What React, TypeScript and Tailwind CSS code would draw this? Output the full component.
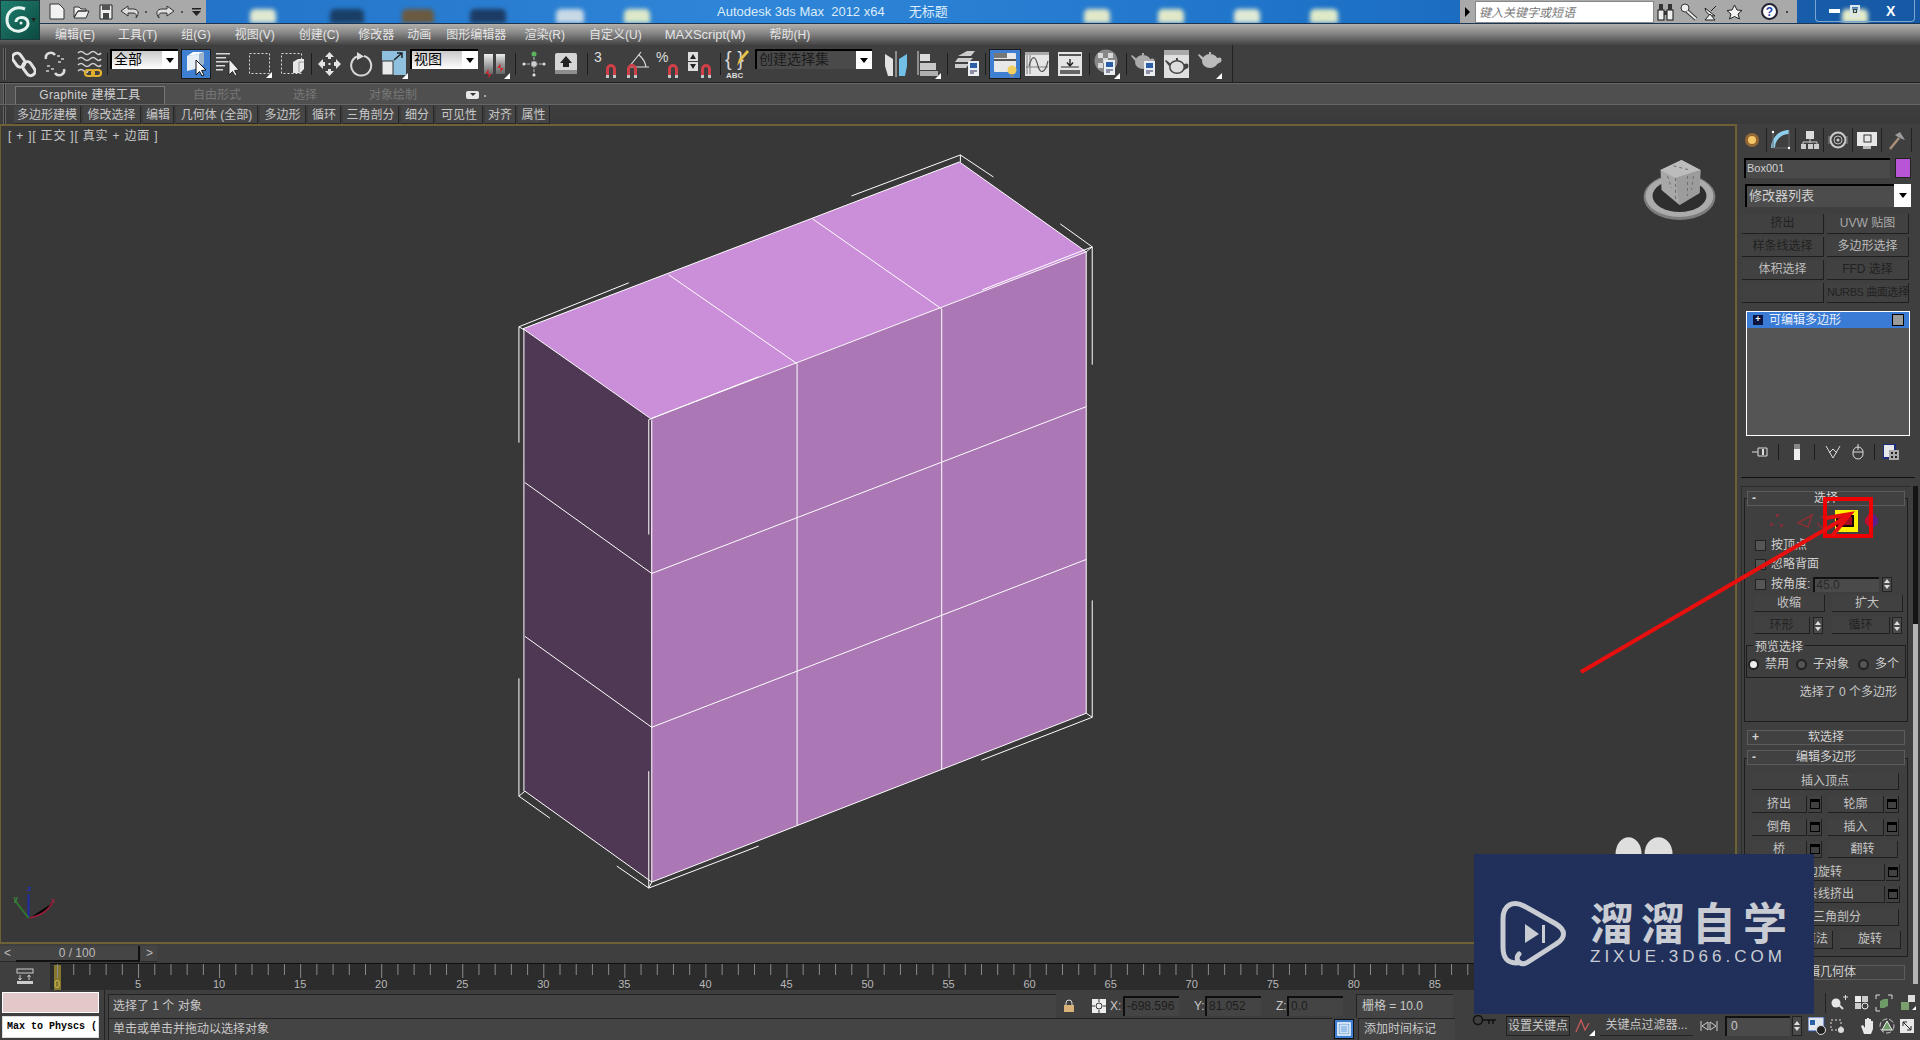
import React from "react";

type P = { children?: React.ReactNode; w: number; h: number; cls?: string };
const S = ({ children, w, h, cls }: P) => (
  <svg width={w} height={h} viewBox={`0 0 ${w} ${h}`} fill="none" className={`shrink-0 ${cls ?? ""}`}>
    {children}
  </svg>
);

const Sep = ({ cls }: { cls: string }) => <div className={`w-px h-[22px] bg-[#1c1c1c] shrink-0 ${cls}`} />;

const Magnet = () => (
  <g>
    <path d="M2 14 V8 a5 5 0 0 1 10 0 V14 H9 V8 a2 2 0 0 0 -4 0 V14 Z" fill="#d04048" />
    <rect x="2" y="14" width="3" height="3" fill="#bfc7c7" />
    <rect x="9" y="14" width="3" height="3" fill="#bfc7c7" />
  </g>
);

const LinkIcon = () => (
  <S w={24} h={28}>
    <g stroke="#e3e3e3" strokeWidth="3">
      <rect x="2" y="3" width="9" height="15" rx="4.5" transform="rotate(-35 6 10)" />
      <rect x="12" y="11" width="9" height="15" rx="4.5" transform="rotate(-35 17 18)" />
    </g>
  </S>
);
const UnlinkIcon = () => (
  <S w={24} h={28}>
    <g stroke="#dcdcdc" strokeWidth="2.5">
      <path d="M3 9 a5 5 0 0 1 9 -4" />
      <path d="M21 19 a5 5 0 0 1 -9 4" />
    </g>
    <g fill="#aaa">
      <rect x="14" y="5" width="3" height="2" /><rect x="18" y="8" width="3" height="2" />
      <rect x="15" y="11" width="3" height="2" /><rect x="4" y="15" width="3" height="2" />
      <rect x="8" y="18" width="3" height="2" /><rect x="3" y="20" width="3" height="2" />
    </g>
  </S>
);
const BindIcon = () => (
  <S w={27} h={30}>
    <g stroke="#cfcfcf" strokeWidth="1.6">
      <path d="M2 4 q3 -3 6 0 t6 0 t6 0 t5 0" />
      <path d="M2 10 q3 -3 6 0 t6 0 t6 0 t5 0" />
      <path d="M2 16 q3 -3 6 0 t6 0 t6 0 t5 0" />
      <path d="M2 22 q3 -3 6 0 t4 0" />
    </g>
    <rect x="9" y="21" width="9" height="6" rx="3" stroke="#e0b030" strokeWidth="2.2" />
    <rect x="16" y="21" width="9" height="6" rx="3" stroke="#e0b030" strokeWidth="2.2" />
  </S>
);
const SelectIcon = () => (
  <div className="w-[30px] h-[30px] bg-[#3f7fd2] border border-[#1c1c1c] flex items-center justify-center ml-[3px] shrink-0">
    <S w={24} h={26}>
      <path d="M3 5 L15 3 V17 L3 20 Z" fill="#e6eef6" />
      <path d="M3 5 L9 1 L20 1 L15 3 Z" fill="#fff" />
      <path d="M15 3 L20 1 V13 L15 17 Z" fill="#9db4cc" />
      <path d="M12 9 V24 L15.5 20.5 L18 25 L20 24 L17.5 19.5 L22 19 Z" fill="#fff" stroke="#111" strokeWidth="1" />
    </S>
  </div>
);
const ByNameIcon = () => (
  <S w={25} h={28}>
    <g fill="#d8d8d8">
      <rect x="1" y="3" width="14" height="1.5" /><rect x="1" y="7" width="10" height="1.5" />
      <rect x="1" y="11" width="14" height="1.5" /><rect x="1" y="15" width="9" height="1.5" />
      <rect x="1" y="19" width="7" height="1.5" />
    </g>
    <path d="M14 9 V25 L17.5 21.5 L20 26 L22 25 L19.5 20.5 L24 20 Z" fill="#eee" stroke="#111" strokeWidth=".8" />
  </S>
);
const RectIcon = () => (
  <S w={24} h={28}>
    <rect x="1.5" y="3.5" width="20" height="20" stroke="#ddd" strokeDasharray="2 2" />
    <path d="M18 28 L24 22 V28 Z" fill="#fff" />
  </S>
);
const WindowIcon = () => (
  <S w={25} h={28}>
    <rect x="1.5" y="3.5" width="20" height="20" stroke="#ddd" strokeDasharray="2 2" />
    <path d="M13 12 L18 9 H24 V19 L20 23 H13 Z" fill="#e8e8e8" />
    <path d="M19 12 H24 M19 12 V22" stroke="#999" />
  </S>
);
const MoveIcon = () => (
  <S w={25} h={26}>
    <path d="M12.5 1 L17 6 H14 V11 H19 V8 L24 13 L19 18 V15 H14 V20 H17 L12.5 25 L8 20 H11 V15 H6 V18 L1 13 L6 8 V11 H11 V6 H8 Z" fill="#e4e4e4" />
    <rect x="8" y="8" width="9" height="10" fill="#3f3f3f" />
    <rect x="11.5" y="12" width="2" height="2" fill="#e4e4e4" />
  </S>
);
const RotateIcon = () => (
  <S w={23} h={28}>
    <path d="M14 6 A10 10 0 1 1 7 6.5" stroke="#d8d8d8" strokeWidth="2" />
    <path d="M7 2 L14 6.5 L7 10 Z" fill="#ddd" />
  </S>
);
const ScaleIcon = () => (
  <S w={26} h={30}>
    <rect x="0" y="2" width="24" height="24" fill="#8fc0de" />
    <rect x="0" y="12" width="11" height="14" fill="#eaeaea" stroke="#333" />
    <path d="M12 11 L20 4 M15 4 H20 V9" stroke="#222" strokeWidth="1.5" />
    <path d="M20 30 L26 24 V30 Z" fill="#fff" />
  </S>
);
const PivotIcon = () => (
  <S w={26} h={30}>
    <rect x="0" y="5" width="9" height="20" fill="url(#gg)" />
    <rect x="12" y="5" width="9" height="20" fill="url(#gh)" />
    <path d="M4.5 20 L1.5 25 H7.5 L4.5 29 Z M16.5 14 L13.5 19 H19.5 L16.5 23 Z" fill="#d21f2a" />
    <path d="M20 30 L26 24 V30 Z" fill="#fff" />
    <defs>
      <linearGradient id="gg" x1="0" y1="0" x2="0" y2="1"><stop offset="0" stopColor="#eee" /><stop offset="1" stopColor="#666" /></linearGradient>
      <linearGradient id="gh" x1="0" y1="0" x2="0" y2="1"><stop offset="0" stopColor="#eee" /><stop offset=".5" stopColor="#999" /><stop offset="1" stopColor="#666" /></linearGradient>
    </defs>
  </S>
);
const ManipIcon = () => (
  <S w={24} h={28}>
    <path d="M12 3 V25 M1 14 H23" stroke="#bbb" strokeDasharray="3 1" />
    <circle cx="12" cy="4" r="2.5" fill="#5db35d" />
    <rect x="9.5" y="11.5" width="5" height="5" fill="#ccc" />
    <circle cx="2" cy="14" r="1.6" fill="#ddd" /><circle cx="22" cy="14" r="1.6" fill="#ddd" />
    <circle cx="12" cy="25" r="1.6" fill="#ddd" />
  </S>
);
const KeyUpIcon = () => (
  <S w={22} h={24}>
    <rect x="0" y="1" width="22" height="21" rx="2" fill="#d5d5d5" />
    <rect x="0" y="18" width="22" height="4" fill="#8e8e8e" />
    <path d="M11 4 L17 11 H14 V15 H8 V11 H5 Z" fill="#222" />
  </S>
);
const Snap = ({ t }: { t: string }) => (
  <div className="relative w-[24px] h-[30px] shrink-0">
    <span className="absolute left-0 top-0 text-[14px] leading-[16px] text-[#ddd]">{t}</span>
    <svg width="14" height="17" viewBox="0 0 14 17" className="absolute right-[0px] bottom-[1px]"><Magnet /></svg>
  </div>
);
const AngleSnap = () => (
  <div className="relative w-[26px] h-[30px] shrink-0">
    <svg width="26" height="30" viewBox="0 0 26 30" fill="none" className="absolute inset-0">
      <path d="M4 18 L16 3 M4 18 H24 M14 6 Q20 11 21 18" stroke="#ddd" strokeWidth="1.2" />
      <g transform="translate(0 12)"><Magnet /></g>
    </svg>
  </div>
);
const SpinSnap = () => (
  <S w={24} h={30}>
    <rect x="0" y="3" width="10" height="9" fill="#ddd" />
    <rect x="0" y="13" width="10" height="9" fill="#ddd" />
    <path d="M5 5 L8 10 H2 Z M5 20 L2 15 H8 Z" fill="#222" />
    <g transform="translate(11 12)"><Magnet /></g>
  </S>
);
const BraceIcon = () => (
  <div className="w-[25px] h-[32px] relative shrink-0">
    <span className="absolute left-0 top-[0px] text-[20px] leading-[22px] text-[#d8d8d8]">{"{ }"}</span>
    <span className="absolute left-[1px] bottom-[0px] text-[8px] leading-[9px] font-bold text-[#ddd]">ABC</span>
    <svg width="14" height="18" viewBox="0 0 14 18" className="absolute right-[0px] top-[1px]">
      <path d="M1 17 L3 10 L11 1 L13 3 L5 12 Z" fill="#e9c24a" />
    </svg>
  </div>
);
const MirrorIcon = () => (
  <S w={25} h={26}>
    <path d="M0 3 L8 8 V25 H3 L0 15 Z" fill="#e2e2e2" />
    <path d="M11 0 V26" stroke="#ddd" />
    <path d="M22 3 L14 8 V25 H20 L22 15 Z" fill="#72bfe8" />
  </S>
);
const AlignIcon = () => (
  <S w={24} h={30}>
    <path d="M1 2 V26" stroke="#ddd" />
    <rect x="3" y="5" width="10" height="7" fill="#ddd" />
    <rect x="3" y="14" width="16" height="7" fill="#c8c8c8" />
    <rect x="3" y="22" width="18" height="5" fill="#b0b0b0" />
    <path d="M18 30 L24 24 V30 Z" fill="#fff" />
  </S>
);
const Doc = ({ x, y }: { x: number; y: number }) => (
  <g transform={`translate(${x} ${y})`}>
    <rect width="11" height="15" fill="#e8eef2" />
    <rect x="2" y="2" width="7" height="5" fill="#2a5fa8" />
    <path d="M2 10 H9 M2 12 H6" stroke="#335" />
  </g>
);
const LayerIcon = () => (
  <S w={25} h={28}>
    <g fill="#ccc">
      <path d="M12 1 H20 L16 6 H3 Z" /><path d="M3 8 H18 L14 12 H0 Z" /><path d="M0 14 H14 L11 18 H0 Z" />
    </g>
    <Doc x={13} y={11} />
  </S>
);
const ExplorerBtn = () => (
  <div className="w-[32px] h-[30px] bg-[#3f7fd2] border border-[#1c1c1c] flex items-center justify-center ml-[3px] shrink-0">
    <S w={28} h={28}>
      <rect x="3" y="3" width="22" height="19" rx="1" fill="#e8e8e8" />
      <rect x="3" y="3" width="13" height="5" fill="#777" />
      <rect x="3" y="9" width="22" height="2" fill="#555" />
      <circle cx="21" cy="20" r="4.5" fill="#f2d060" />
      <rect x="19.5" y="24" width="3" height="3" fill="#888" />
    </S>
  </div>
);
const CurveIcon = () => (
  <S w={25} h={24}>
    <rect width="24" height="24" fill="#e5e5e5" />
    <rect width="24" height="3" fill="#aaa" />
    <path d="M2 22 V3 M5 3 V22 M1 15 H23" stroke="#666" strokeWidth=".8" />
    <path d="M4 14 C8 0 11 6 13 14 S20 22 23 9" stroke="#555" strokeWidth="1.2" />
  </S>
);
const SchematicIcon = () => (
  <S w={24} h={24}>
    <rect width="24" height="24" fill="#e5e5e5" />
    <rect x="1" y="2" width="22" height="2" fill="#555" />
    <rect x="2" y="18" width="20" height="4" fill="#666" />
    <path d="M12 7 V13 M9 10.5 L12 14 L15 10.5" stroke="#222" strokeWidth="1.4" />
    <path d="M3 15 H21" stroke="#333" />
  </S>
);
const MaterialIcon = () => (
  <S w={26} h={30}>
    <circle cx="12" cy="12" r="11.5" fill="#888" />
    <g fill="#d8d8d8">
      <rect x="4" y="4" width="5" height="5" /><rect x="14" y="4" width="5" height="5" />
      <rect x="9" y="9" width="5" height="5" /><rect x="4" y="14" width="5" height="5" />
      <rect x="14" y="14" width="5" height="5" />
    </g>
    <Doc x={10} y={11} />
    <path d="M20 30 L26 24 V30 Z" fill="#fff" />
  </S>
);
const Teapot = ({ x = 0, y = 0, fill = "#d5d5d5" }: { x?: number; y?: number; fill?: string }) => (
  <g transform={`translate(${x} ${y})`} fill={fill}>
    <ellipse cx="12" cy="9" rx="8" ry="7" />
    <path d="M4 8 L0 3 L1 2 L6 6 Z M19 6 Q25 4 23 10 L19 12 Z" />
    <rect x="11" y="0" width="2" height="2" />
  </g>
);
const TeaSetup = () => (
  <S w={25} h={28}>
    <Teapot y={3} fill="#aaa" />
    <Doc x={13} y={11} />
  </S>
);
const TeaFrame = () => (
  <S w={25} h={28}>
    <rect y="0" width="25" height="28" fill="#e0e0e0" />
    <rect y="0" width="25" height="5" fill="#aaa" />
    <g transform="translate(1 8)"><Teapot fill="#444" /><ellipse cx="12" cy="9" rx="6.5" ry="5.5" fill="#ddd" /></g>
  </S>
);
const TeaQuick = () => (
  <S w={24} h={30}>
    <Teapot y={3} fill="#bbb" />
    <path d="M18 30 L24 24 V30 Z" fill="#fff" />
  </S>
);

const Drop = ({ t, cls, textCls = "bg-[linear-gradient(#c8c8c8,#fff)] text-black" }: { t: string; cls: string; textCls?: string }) => (
  <div className={`h-[20px] self-start mt-[4px] flex border-t-2 border-l-2 border-black bg-white shrink-0 ${cls}`}>
    <div className={`flex-1 text-[14px] leading-[17px] pl-[2px] overflow-hidden whitespace-nowrap ${textCls}`}>{t}</div>
    <div className="w-[16px] flex items-center justify-center bg-white"><div className="w-0 h-0 border-l-[4px] border-r-[4px] border-t-[5px] border-l-transparent border-r-transparent border-t-black" /></div>
  </div>
);

const Grip = ({ cls = "" }: { cls?: string }) => <div className={`w-[3px] border-x border-[#666] bg-[#2b2b2b] shrink-0 ${cls}`} />;

const wallpaper = [
  "left-[250px] w-[26px] bg-[#dfe8d0]", "left-[330px] w-[34px] bg-[#1a3f66]", "left-[402px] w-[32px] bg-[#6a5a40]",
  "left-[470px] w-[36px] bg-[#1c3c66]", "left-[556px] w-[28px] bg-[#c7d9e6]", "left-[624px] w-[26px] bg-[#dce8c8]",
  "left-[1084px] w-[26px] bg-[#e0e8c8]", "left-[1158px] w-[26px] bg-[#e0e8c8]", "left-[1234px] w-[26px] bg-[#dfe9d4]",
  "left-[1310px] w-[28px] bg-[#dfe9c8]", "left-[1842px] w-[26px] bg-[#e4ecc8]",
];

const menu: [string, string][] = [
  ["编辑(E)", "ml-[15px]"], ["工具(T)", "ml-[23px]"], ["组(G)", "ml-[24px]"], ["视图(V)", "ml-[24px]"], ["创建(C)", "ml-[24px]"],
  ["修改器", "ml-[19px]"], ["动画", "ml-[13px]"], ["图形编辑器", "ml-[15px]"], ["渲染(R)", "ml-[18px]"], ["自定义(U)", "ml-[24px]"],
  ["MAXScript(M)", "ml-[23px] text-[13px]"], ["帮助(H)", "ml-[24px]"],
];

const TitleBar = () => (
  <div className="relative h-[24px] flex bg-[linear-gradient(90deg,#1f6ec4,#2f86d8_40%,#1d72c8_70%,#1658a3)] border-b border-[#1b3553] overflow-hidden">
    {wallpaper.map((c) => <div key={c} className={`absolute bottom-0 h-[14px] rounded-t-[5px] blur-[2px] ${c}`} />)}
    <div className="relative w-[40px] shrink-0" />
    <div className="relative w-[166px] h-[23px] bg-[#a9a9a9] flex items-center pl-[9px] shrink-0">
      <S w={16} h={17}><path d="M1 1 H10 L15 6 V16 H1 Z" fill="#f2f2f2" stroke="#333" /></S>
      <S w={17} h={15} cls="ml-[8px]"><path d="M1 3 H6 L8 5 H13 V7 H5 L1 13 Z M5 7 H16 L13 14 H1 Z" fill="#eee" stroke="#333" /></S>
      <S w={14} h={16} cls="ml-[9px]"><path d="M1 1 H13 V15 H1 Z" fill="#eee" stroke="#222" /><rect x="3" y="1" width="8" height="5" fill="#555" /><rect x="4" y="9" width="6" height="6" fill="#444" /></S>
      <S w={21} h={14} cls="ml-[7px]"><path d="M8 1 L1 6 L8 11 V8 H13 C16 8 17 10 16 13 C20 8 18 4 13 4 H8 Z" fill="#ddd" stroke="#333" /></S>
      <div className="w-[2px] h-[2px] bg-[#555] ml-[4px]" />
      <S w={20} h={14} cls="ml-[8px]"><path d="M12 1 L19 6 L12 11 V8 H7 C4 8 3 10 4 13 C0 8 2 4 7 4 H12 Z" fill="#ddd" stroke="#333" /></S>
      <div className="w-[2px] h-[2px] bg-[#555] ml-[6px]" />
      <S w={9} h={8} cls="ml-[9px]"><rect width="9" height="1.5" fill="#222" /><path d="M0 3 H9 L4.5 8 Z" fill="#222" /></S>
    </div>
    <span className="relative ml-[511px] text-[13px] leading-[23px] text-[#dcecf9] whitespace-pre">Autodesk 3ds Max  2012 x64</span>
    <span className="relative ml-[24px] text-[13px] leading-[23px] text-[#dcecf9]">无标题</span>
    <div className="flex-1" />
    <div className="relative w-[337px] h-[23px] bg-[#a9a9a9] flex items-center pl-[5px] shrink-0">
      <div className="w-0 h-0 border-y-[5px] border-l-[5px] border-y-transparent border-l-black" />
      <div className="ml-[5px] w-[179px] h-[22px] bg-white text-[12px] italic leading-[23px] pl-[3px] text-[#777] border border-[#888]">键入关键字或短语</div>
      <S w={17} h={18} cls="ml-[3px]"><rect x="1" y="7" width="6" height="10" fill="#eee" stroke="#111" /><rect x="10" y="7" width="6" height="10" fill="#eee" stroke="#111" /><rect x="2" y="1" width="4" height="6" fill="#333" /><rect x="11" y="1" width="4" height="6" fill="#333" /><rect x="7" y="8" width="3" height="4" fill="#333" /></S>
      <S w={18} h={18} cls="ml-[6px]"><circle cx="5" cy="5" r="4" fill="#eee" stroke="#333" /><path d="M7 8 L16 16" stroke="#333" strokeWidth="4" /><path d="M7 8 L16 16" stroke="#eee" strokeWidth="2" /></S>
      <S w={16} h={18} cls="ml-[5px]"><path d="M2 5 A9 9 0 0 0 12 13 Z" fill="#eee" stroke="#222" /><path d="M8 8 L13 3 M2 17 H12 L7 11 Z" stroke="#222" fill="#eee" /></S>
      <S w={17} h={16} cls="ml-[7px]"><path d="M8.5 1 L11 6 L16 6.5 L12 10 L13.5 15 L8.5 12.5 L3.5 15 L5 10 L1 6.5 L6 6 Z" fill="#f2f2f2" stroke="#222" /></S>
      <div className="ml-[18px] w-[17px] h-[17px] rounded-full bg-white border-2 border-[#223] text-[#2448b0] text-[12px] font-bold leading-[14px] text-center">?</div>
      <div className="w-[2px] h-[2px] bg-[#444] ml-[8px]" />
    </div>
    <div className="relative ml-[18px] mr-[5px] w-[100px] h-[22px] border border-t-0 border-[#7ba6d2] rounded-b-[4px] flex items-center shrink-0">
      <div className="ml-[13px] w-[11px] h-[4px] bg-white" />
      <div className="ml-[10px] w-[10px] h-[12px] border-2 border-[#dbe6ef] flex items-center justify-center"><div className="w-[4px] h-[4px] border border-[#345]" /></div>
      <span className="ml-[26px] text-[14px] font-bold text-white leading-[20px]">X</span>
    </div>
  </div>
);

const MenuBar = () => (
  <div className="h-[21px] flex items-center pl-[40px] bg-[linear-gradient(#b2b0ac,#8a8a8a_40%,#434343)] text-[12px] text-[#e4e4e4]">
    {menu.map(([t, c]) => <span key={t} className={`whitespace-nowrap ${c}`}>{t}</span>)}
  </div>
);

const Toolbar = () => (
  <div className="h-[38px] flex bg-[#3f3f3f] border-b border-[#1f1f1f]">
    <div className="w-[1233px] flex items-center pl-[3px] border-r border-[#222] shrink-0">
      <Grip cls="h-[32px]" />
      <div className="ml-[6px]"><LinkIcon /></div>
      <div className="ml-[7px]"><UnlinkIcon /></div>
      <div className="ml-[9px]"><BindIcon /></div>
      <Sep cls="ml-[4px]" />
      <Drop t="全部" cls="ml-[2px] w-[68px]" />
      <SelectIcon />
      <div className="ml-[4px]"><ByNameIcon /></div>
      <div className="ml-[8px]"><RectIcon /></div>
      <div className="ml-[8px]"><WindowIcon /></div>
      <Sep cls="ml-[6px]" />
      <div className="ml-[5px]"><MoveIcon /></div>
      <div className="ml-[8px]"><RotateIcon /></div>
      <div className="ml-[9px]"><ScaleIcon /></div>
      <Drop t="视图" cls="ml-[2px] w-[68px]" />
      <div className="ml-[6px]"><PivotIcon /></div>
      <Sep cls="ml-[5px]" />
      <div className="ml-[6px]"><ManipIcon /></div>
      <div className="ml-[9px]"><KeyUpIcon /></div>
      <Sep cls="ml-[10px]" />
      <div className="ml-[6px]"><Snap t="3" /></div>
      <div className="ml-[7px]"><AngleSnap /></div>
      <div className="ml-[5px]"><Snap t="%" /></div>
      <div className="ml-[8px]"><SpinSnap /></div>
      <Sep cls="ml-[8px]" />
      <div className="ml-[4px]"><BraceIcon /></div>
      <Drop t="创建选择集" cls="ml-[5px] w-[117px]" textCls="bg-[#4a4a4a] text-[#1c1c1c]" />
      <div className="ml-[13px]"><MirrorIcon /></div>
      <div className="ml-[7px]"><AlignIcon /></div>
      <Sep cls="ml-[6px]" />
      <div className="ml-[7px]"><LayerIcon /></div>
      <Sep cls="ml-[5px]" />
      <ExplorerBtn />
      <div className="ml-[4px]"><CurveIcon /></div>
      <div className="ml-[8px]"><SchematicIcon /></div>
      <Sep cls="ml-[7px]" />
      <div className="ml-[4px]"><MaterialIcon /></div>
      <Sep cls="ml-[6px]" />
      <div className="ml-[4px]"><TeaSetup /></div>
      <div className="ml-[8px]"><TeaFrame /></div>
      <div className="ml-[9px]"><TeaQuick /></div>
    </div>
  </div>
);

const ribbonItems: [string, string][] = [
  ["多边形建模", "w-[67px]"], ["修改选择", "w-[58px]"], ["编辑", "w-[31px]"], ["几何体 (全部)", "w-[82px]"], ["多边形", "w-[46px]"],
  ["循环", "w-[33px]"], ["三角剖分", "w-[56px]"], ["细分", "w-[33px]"], ["可见性", "w-[47px]"], ["对齐", "w-[31px]"], ["属性", "w-[32px]"],
];

const Ribbon = () => (
  <div className="h-[41px] flex flex-col">
    <div className="h-[22px] flex items-end bg-[#4f4f4f] border-t border-[#666] border-b border-[#1f1f1f] pl-[3px] text-[12px]">
      <Grip cls="h-[20px]" />
      <div className="ml-[9px] w-[150px] h-[18px] bg-[#434343] border-t border-x border-[#777] text-[#cfcfcf] text-center leading-[17px] tracking-[.3px]">Graphite 建模工具</div>
      <span className="ml-[28px] leading-[18px] text-[#777]">自由形式</span>
      <span className="ml-[52px] leading-[18px] text-[#777]">选择</span>
      <span className="ml-[52px] leading-[18px] text-[#777]">对象绘制</span>
      <div className="ml-[49px] mb-[5px] w-[13px] h-[8px] rounded-[2px] bg-[#e8e8e8] flex justify-center"><div className="w-0 h-0 mt-[2px] border-x-[3px] border-t-[3px] border-x-transparent border-t-[#333]" /></div>
      <div className="ml-[5px] mb-[7px] w-[2px] h-[2px] bg-[#aaa]" />
    </div>
    <div className="flex-1 flex items-center bg-[linear-gradient(#3e3e3e,#3a3a3a)] pl-[3px] text-[12px] text-[#c8c8c8]">
      <Grip cls="h-[18px]" />
      <div className="flex ml-[8px] gap-[2px]">
        {ribbonItems.map(([t, w]) => (
          <div key={t} className={`h-[18px] bg-[#454545] border-r border-b border-[#262626] text-center whitespace-nowrap leading-[19px] ${w}`}>{t}</div>
        ))}
      </div>
    </div>
  </div>
);

const W = "#ffffff";
const scene: [number, number, number, number][] = [
  [522, 329, 959, 162], [959, 162, 1086, 252], [1086, 252, 650, 419], [650, 419, 522, 329],
  [668, 275, 796.5, 364], [812, 219, 941, 309],
  [651, 574, 1086, 407], [651, 728, 1086, 560],
  [524, 483, 651, 574], [524, 637, 651, 728],
  [523, 329, 523, 792], [524, 792, 651, 883], [651, 883, 1086, 714],
  [651, 420, 651, 883], [796.5, 364, 796.5, 826], [941.3, 309, 941.3, 770], [1086, 252, 1086, 714],
  // selection brackets
  [518, 327, 518, 443], [518, 327, 628, 283], [960, 155, 851, 196], [960, 155, 993, 177],
  [1092, 247, 1060, 224], [1092, 247, 1092, 365], [1092, 247, 982, 290],
  [648, 420, 758, 377], [648, 420, 648, 535],
  [518, 797, 518, 679], [518, 797, 549, 819], [648, 889, 648, 772], [648, 889, 616, 867], [648, 889, 758, 847],
  [1092, 718, 1092, 601], [1092, 718, 981, 761], [960, 155, 960, 162], [518, 327, 523, 330], [1092, 247, 1086, 252], [518, 797, 524, 792], [648, 889, 651, 883], [1092, 718, 1086, 714],
];

const Scene = () => (
  <svg viewBox="1 126 1733 817" className="absolute inset-0 w-full h-full">
    <path d="M522 329 L959 162 L1086 252 L650 419 Z" fill="#cb8fd9" />
    <path d="M650 419 L1086 252 V714 L651 883 Z" fill="#ab77b5" />
    <path d="M522 329 L650 419 L651 883 L523 792 Z" fill="#4f3853" />
    {scene.map(([a, b, c, d], i) => <line key={i} x1={a} y1={b} x2={c} y2={d} stroke={W} strokeWidth="1" />)}
    {/* ViewCube */}
    <ellipse cx="1680" cy="197" rx="36" ry="23" fill="#7d7d7d" />
    <ellipse cx="1680" cy="196" rx="34" ry="21" fill="#ababab" />
    <ellipse cx="1680" cy="196" rx="27" ry="16" fill="#2e2e2e" />
    <path d="M1682 160 L1701 170 L1700 193 L1680 205 L1662 190 L1661 170 Z" fill="#a8a8a8" />
    <path d="M1661 170 L1682 160 L1701 170 L1676 178 Z" fill="#bcbcbc" />
    <path d="M1676 178 L1701 170 L1700 193 L1680 205 Z" fill="#9c9c9c" />
    <path d="M1676 178 V200 M1668 176 L1672 188 M1688 176 V196 M1694 176 L1692 190 M1674 166 L1690 170" stroke="#6e6e6e" strokeDasharray="3 3" />
    {/* axis gizmo */}
    <path d="M27 919 V895" stroke="#1c2cb0" strokeWidth="1.8" />
    <path d="M27 919 L13 901" stroke="#2f7a30" strokeWidth="1.8" />
    <path d="M28 919 Q44 916 51 904" stroke="#8f1f3a" strokeWidth="1.8" />
    <text x="26" y="892" fontSize="8" fontWeight="bold" fill="#2233c0">z</text>
    <text x="12" y="902" fontSize="8" fontWeight="bold" fill="#3a8a3a">y</text>
    <text x="49" y="904" fontSize="8" fontWeight="bold" fill="#a02040">x</text>
    {/* blobs behind the watermark */}
    <ellipse cx="1629" cy="855" rx="13" ry="17" fill="#dedede" />
    <ellipse cx="1659" cy="855" rx="14" ry="17" fill="#dedede" />
  </svg>
);

const Viewport = () => (
  <div className="relative h-[820px] border-t-2 border-b-2 border-l border-r-2 border-[#6d6135] bg-[#383838]">
    <Scene />
    <div className="absolute left-[7px] top-[2px] text-[12px] leading-[16px] tracking-[.8px] text-[#c8c8c8] whitespace-pre">[ + ][ 正交 ][ 真实 + 边面 ]</div>
  </div>
);

const TimeSlider = () => (
  <div className="h-[19px] flex bg-[#3f3f3f] items-start pt-[2px] text-[12px] text-[#bbb]">
    <div className="w-[16px] h-[16px] leading-[15px] pl-[4px] bg-[#454545] border-b border-[#2a2a2a]">&lt;</div>
    <div className="w-[124px] h-[16px] bg-[#454545] border-b-2 border-r-2 border-[#111] text-center leading-[15px]">0 / 100</div>
    <div className="w-[16px] h-[16px] leading-[15px] pl-[5px] ml-[1px] bg-[#454545] border-b border-[#2a2a2a]">&gt;</div>
  </div>
);

const frames = Array.from({ length: 106 }, (_, i) => i);
const Track = () => (
  <div className="h-[27px] flex bg-[#3f3f3f]">
    <div className="w-[50px] flex items-center justify-center shrink-0">
      <S w={18} h={17}>
        <rect x="1" y="1" width="16" height="4" stroke="#ccc" />
        <path d="M4 7 V12 M2.5 10 L4 12 L5.5 10 M13 7 V12 M11.5 9 L13 7 L14.5 9" stroke="#ccc" />
        <rect x="1" y="13" width="16" height="3" fill="#ccc" />
      </S>
    </div>
    <svg width="1687" height="27" viewBox="50 963 1687 27" className="bg-[#2c2c2c]">
      <line x1="50" x2="1737" y1="963.5" y2="963.5" stroke="#111" />
      <rect x="54" y="965" width="7" height="25" fill="#85762d" />
      {frames.map((f) => {
        const x = 57.5 + f * 16.21;
        return <line key={f} x1={x} x2={x} y1={964} y2={f % 5 === 0 ? 978 : 975} stroke="#8a8a8a" />;
      })}
      {frames.filter((f) => f % 5 === 0).map((f) => (
        <text key={f} x={57 + f * 16.21} y={988} textAnchor="middle" fontSize="11" fill={f === 0 ? "#c9bb5a" : "#b8b8b8"}>{f}</text>
      ))}
    </svg>
  </div>
);

const Btn = ({ t, cls, tone = "text-[#c4c4c4]", size = "text-[12px]" }: { t: string; cls: string; tone?: string; size?: string }) => (
  <div className={`bg-[#414141] border-b border-r border-[#1f1f1f] border-t-[#4e4e4e] text-center whitespace-nowrap overflow-hidden shrink-0 ${size} ${tone} ${cls}`}>{t}</div>
);

const OptBtn = () => (
  <div className="w-[14px] h-[17px] ml-px bg-[#414141] border-b border-r border-[#1f1f1f] flex items-center justify-center shrink-0">
    <div className="w-[10px] h-[10px] border border-black border-t-[3px]" />
  </div>
);

const Spin = ({ cls }: { cls: string }) => (
  <div className={`w-[10px] flex flex-col justify-center gap-[2px] items-center bg-[#4a4a4a] border border-[#222] shrink-0 ${cls}`}>
    <div className="w-0 h-0 border-x-[3px] border-b-[4px] border-x-transparent border-b-[#ddd]" />
    <div className="w-0 h-0 border-x-[3px] border-t-[4px] border-x-transparent border-t-[#ddd]" />
  </div>
);

const Rollout = ({ t, sign }: { t: string; sign: string }) => (
  <div className="relative z-10 mx-[6px] h-[15px] flex items-center bg-[#414141] border border-[#5c5c5c] text-[12px] text-[#d2d2d2]">
    <span className="w-[14px] pl-[4px] font-bold leading-[13px]">{sign}</span>
    <span className="flex-1 text-center pr-[14px] leading-[13px]">{t}</span>
  </div>
);

const Check = ({ t, cls }: { t: string; cls: string }) => (
  <div className={`flex items-center h-[16px] pl-[10px] text-[12px] text-[#cfcfcf] ${cls}`}>
    <div className="w-[11px] h-[11px] bg-[#555] border border-[#222]" />
    <span className="ml-[5px]">{t}</span>
  </div>
);

const Radio = ({ t, on, cls }: { t: string; on?: boolean; cls: string }) => (
  <div className={`flex items-center ${cls}`}>
    <div className={`w-[11px] h-[11px] rounded-full border-2 border-[#222] ${on ? "bg-[#eee]" : "bg-[#555]"}`} />
    <span className="ml-[6px]">{t}</span>
  </div>
);

const PanelTabs = () => (
  <div className="mt-[4px] h-[24px] flex pl-[1px]">
    <div className="w-[29px] border-r border-[#222] flex items-center justify-center">
      <S w={16} h={16}><circle cx="8" cy="8" r="7" fill="#e8902a" opacity=".5" /><circle cx="8" cy="8" r="4" fill="#f5c56a" /></S>
    </div>
    <div className="w-[29px] border-r border-[#222] flex items-center justify-center">
      <S w={20} h={20}><path d="M2 18 A16 16 0 0 1 18 2" stroke="#8fcdec" strokeWidth="4" /><path d="M2 1 V18 H18 V1" stroke="#666" /><circle cx="2" cy="2" r="1.2" fill="#fff" /><circle cx="18" cy="18" r="1.2" fill="#fff" /></S>
    </div>
    <div className="w-[28px] border-r border-[#222] flex items-center justify-center">
      <S w={20} h={20}><rect x="6" y="1" width="8" height="8" fill="#ddd" /><path d="M10 9 V13 M3 14 V12 H17 V14" stroke="#ccc" /><rect x="1" y="14" width="5" height="5" fill="#ccc" /><rect x="8" y="14" width="5" height="5" fill="#ccc" /><rect x="14" y="14" width="5" height="5" fill="#ccc" /></S>
    </div>
    <div className="w-[29px] border-r border-[#222] flex items-center justify-center">
      <S w={20} h={20}><circle cx="10" cy="10" r="7.5" stroke="#ccc" strokeWidth="2" /><circle cx="10" cy="10" r="4" stroke="#bbb" /><circle cx="10" cy="10" r="1.5" fill="#ccc" /><path d="M1 6 V14 M19 6 V14" stroke="#888" /></S>
    </div>
    <div className="w-[29px] border-r border-[#222] flex items-center justify-center">
      <S w={20} h={19}><rect x="0" y="1" width="20" height="14" fill="#e8e8e8" /><rect x="7" y="4" width="7" height="7" stroke="#333" /><rect x="6" y="15" width="8" height="3" fill="#bbb" /></S>
    </div>
    <div className="w-[30px] border-r border-[#222] flex items-center justify-center">
      <S w={19} h={19}><path d="M3 18 L12 7" stroke="#a8907a" strokeWidth="2.5" /><path d="M8 4 L13 1 L18 9 L15 8 L11 6 Z" fill="#9c9c9c" /></S>
    </div>
  </div>
);

const ModBtns: [string, string, string][] = [
  ["挤出", "text-[#222]", "text-[12px]"], ["UVW 贴图", "text-[#a8a8a8]", "text-[12px]"],
  ["样条线选择", "text-[#222]", "text-[12px]"], ["多边形选择", "text-[#bcbcbc]", "text-[12px]"],
  ["体积选择", "text-[#bcbcbc]", "text-[12px]"], ["FFD 选择", "text-[#222]", "text-[12px]"],
  ["", "", "text-[12px]"], ["NURBS 曲面选择", "text-[#222]", "text-[11px] tracking-[-0.4px]"],
];

const SelectRollout = () => (
  <>
    <div className="mt-[5px]"><Rollout t="选择" sign="-" /></div>
    <div className="mx-[3px] -mt-[8px] h-[224px] border border-[#1e1e1e] flex flex-col">
      <div className="mt-[11px] h-[21px] flex items-center pl-[23px]">
        <S w={62} h={20}>
          <g fill="#7e3036"><rect x="8" y="3" width="3" height="3" /><rect x="2" y="12" width="3" height="3" /><rect x="12" y="13" width="3" height="3" /></g>
          <path d="M30 12 L44 4 L40 16 Z" stroke="#8a2f33" strokeWidth="1.5" />
          <path d="M52 6 L60 6 M50 12 A5 5 0 0 0 56 16" stroke="#8a2f33" strokeWidth="1.5" />
        </S>
        <div className="ml-[5px] w-[23px] h-[22px] bg-[#fff200] flex items-center pl-[1px] shrink-0">
          <div className="w-[18px] h-[12px] border-2 border-[#1a0508] bg-[#a01020]" />
        </div>
        <S w={13} h={13} cls="ml-[7px]"><path d="M4 0 H9 L13 5 V9 L9 13 H4 L0 9 V5 Z" fill="#c01030" /><path d="M6 0 H9 L13 5 V9 L9 13 H6 Z" fill="#5a1f8c" /></S>
      </div>
      <Check t="按顶点" cls="mt-[6px]" />
      <Check t="忽略背面" cls="mt-[3px]" />
      <div className="flex items-center mt-[4px]">
        <Check t="按角度:" cls="" />
        <div className="ml-[3px] w-[66px] h-[15px] bg-[#4a4a4a] border-t-2 border-l-2 border-[#111] text-[12px] leading-[13px] pl-[1px] text-[#2a2a2a]">45.0</div>
        <Spin cls="ml-[3px] h-[15px]" />
      </div>
      <div className="flex mt-[3px] pl-[9px]">
        <Btn t="收缩" cls="w-[71px] h-[17px] leading-[16px]" />
        <Btn t="扩大" cls="ml-[7px] w-[71px] h-[17px] leading-[16px]" />
      </div>
      <div className="flex mt-[5px] pl-[9px]">
        <Btn t="环形" cls="w-[56px] h-[17px] leading-[16px]" tone="text-[#222]" />
        <Spin cls="ml-[3px] h-[17px]" />
        <Btn t="循环" cls="ml-[9px] w-[58px] h-[17px] leading-[16px]" tone="text-[#222]" />
        <Spin cls="ml-[2px] h-[17px]" />
      </div>
      <div className="relative mt-[11px] mx-[1px] h-[33px] border border-[#1e1e1e] flex items-center text-[12px] text-[#cfcfcf]">
        <span className="absolute left-[6px] -top-[6px] px-[2px] bg-[#3f3f3f] leading-[14px]">预览选择</span>
        <Radio t="禁用" on cls="ml-[1px] mt-[5px]" />
        <Radio t="子对象" cls="ml-[7px] mt-[5px]" />
        <Radio t="多个" cls="ml-[9px] mt-[5px]" />
      </div>
      <div className="mt-[6px] h-[16px] text-right pr-[10px] text-[12px] leading-[16px] text-[#c8c8c8]">选择了 0 个多边形</div>
    </div>
  </>
);

const EditRollout = () => (
  <>
    <div className="mt-[5px]"><Rollout t="编辑多边形" sign="-" /></div>
    <div className="mx-[3px] -mt-[7px] h-[199px] border border-[#1e1e1e] pl-[7px]">
      <Btn t="插入顶点" cls="mt-[14px] w-[147px] h-[17px] leading-[16px]" />
      <div className="flex mt-[6px]"><Btn t="挤出" cls="w-[55px] h-[17px] leading-[16px]" /><OptBtn /><Btn t="轮廓" cls="ml-[6px] w-[56px] h-[17px] leading-[16px]" /><OptBtn /></div>
      <div className="flex mt-[6px]"><Btn t="倒角" cls="w-[55px] h-[17px] leading-[16px]" /><OptBtn /><Btn t="插入" cls="ml-[6px] w-[56px] h-[17px] leading-[16px]" /><OptBtn /></div>
      <div className="flex mt-[5px]"><Btn t="桥" cls="w-[55px] h-[17px] leading-[16px]" /><OptBtn /><Btn t="翻转" cls="ml-[6px] w-[70px] h-[17px] leading-[16px]" /></div>
      <div className="flex mt-[6px]"><Btn t="从边旋转" cls="w-[133px] h-[17px] leading-[16px]" /><OptBtn /></div>
      <div className="flex mt-[5px]"><Btn t="沿样条线挤出" cls="w-[133px] h-[17px] leading-[16px]" /><OptBtn /></div>
      <Btn t="编辑三角剖分" cls="mt-[6px] w-[147px] h-[17px] leading-[16px]" />
      <div className="flex mt-[5px]"><Btn t="重复三角算法" cls="w-[81px] h-[18px] leading-[17px]" /><Btn t="旋转" cls="ml-[7px] w-[61px] h-[18px] leading-[17px]" /></div>
    </div>
  </>
);

const CommandPanel = () => (
  <div className="w-[183px] shrink-0 h-[866px] bg-[#3f3f3f] flex flex-col">
    <PanelTabs />
    <div className="mt-[6px] flex pl-[7px]">
      <div className="w-[146px] h-[20px] bg-[#4a4a4a] border-t-2 border-l-2 border-black text-[11px] leading-[17px] pl-[1px] text-[#d0d0d0]">Box001</div>
      <div className="ml-[5px] w-[16px] h-[20px] bg-[#b855d6] border border-[#222]" />
    </div>
    <div className="mt-[6px] flex ml-[8px] h-[23px]">
      <div className="w-[149px] bg-[#4c4c4c] border-t-2 border-l-2 border-black text-[13px] leading-[19px] pl-[2px] text-[#d0d0d0]">修改器列表</div>
      <div className="w-[17px] bg-white flex items-center justify-center"><div className="w-0 h-0 border-x-[4px] border-t-[5px] border-x-transparent border-t-black" /></div>
    </div>
    <div className="mt-[7px] ml-[5px] grid grid-cols-[82px_82px] gap-x-[3px] gap-y-[3px]">
      {ModBtns.map(([t, c, s], i) => (
        <Btn key={i} t={t} tone={c} size={s} cls="h-[20px] leading-[19px] w-[82px]" />
      ))}
    </div>
    <div className="mt-[8px] ml-[9px] w-[164px] h-[125px] bg-[#555] border border-white">
      <div className="h-[16px] bg-[#3a7bd5] flex items-center pl-[6px] text-[12px] text-[#e8f0fa]">
        <div className="w-[10px] h-[10px] bg-[#0c1440] text-white text-[9px] leading-[9px] text-center font-bold">+</div>
        <span className="ml-[6px] flex-1">可编辑多边形</span>
        <div className="w-[12px] h-[12px] bg-[#9a9a9a] border border-black mr-[5px]" />
      </div>
    </div>
    <div className="mt-[5px] h-[22px] flex items-center pl-[15px]">
      <S w={16} h={12}><path d="M0 6 H6 M6 2 H15 V10 H6 Z" stroke="#ddd" /><rect x="10" y="3" width="2" height="6" fill="#ddd" /></S>
      <Sep cls="ml-[10px] !h-[16px]" />
      <S w={8} h={16} cls="ml-[14px]"><rect x="1" y="0" width="6" height="5" fill="#888" /><rect x="1" y="5" width="6" height="11" fill="#eee" /></S>
      <Sep cls="ml-[13px] !h-[16px]" />
      <S w={16} h={16} cls="ml-[10px]"><path d="M1 2 L8 14 L15 2 M4 9 L8 5 L12 9" stroke="#ddd" /></S>
      <S w={12} h={16} cls="ml-[11px]"><rect x="1" y="3" width="10" height="12" rx="5" stroke="#ddd" /><path d="M6 0 V6 M1 8 H11" stroke="#ddd" /></S>
      <Sep cls="ml-[10px] !h-[16px]" />
      <S w={16} h={16} cls="ml-[8px]"><rect x="0" y="0" width="12" height="14" fill="#e8e8e8" stroke="#1c2a80" strokeWidth="2" /><rect x="6" y="6" width="10" height="10" fill="#aaa" /><path d="M8 8 h2 v2 h-2z M12 8 h2 v2 h-2z M8 12 h2 v2 h-2z M12 12 h2 v2 h-2z" fill="#222" /></S>
    </div>
    <div className="mt-[14px] ml-[4px] w-[174px] h-px bg-[#111]" />
    <div className="relative mt-[8px] flex flex-1 overflow-hidden">
      <div className="w-[170px] ml-[4px] flex flex-col shrink-0 shadow-[inset_1px_1px_0_#2c2c2c]">
        <SelectRollout />
        <div className="mt-[8px]"><Rollout t="软选择" sign="+" /></div>
        <EditRollout />
        <div className="mt-[8px]"><Rollout t="编辑几何体" sign="+" /></div>
      </div>
      <div className="ml-[2px] w-[5px] h-[498px] flex flex-col shrink-0">
        <div className="h-[138px] bg-[#141414]" />
        <div className="flex-1 bg-[#b4b4b4]" />
      </div>
    </div>
  </div>
);

const Field = ({ t, cls }: { t: string; cls: string }) => (
  <div className={`bg-[#444] border-t-2 border-l-2 border-[#0e0e0e] text-[12px] leading-[17px] pl-[2px] text-[#1c1c1c] whitespace-nowrap ${cls}`}>{t}</div>
);

const Status = () => (
  <div className="h-[50px] flex bg-[#3f3f3f] text-[12px] text-[#c8c8c8]">
    <div className="w-[104px] pl-[2px] pt-[2px] shrink-0">
      <div className="w-[97px] h-[21px] bg-[#e3c8c9] border border-white" />
      <div className="mt-[3px] w-[97px] h-[22px] bg-white border border-[#ddd] text-black font-[family-name:'Liberation_Mono',monospace] text-[10px] leading-[20px] pl-[4px] font-bold whitespace-pre overflow-hidden">Max to Physcs (</div>
    </div>
    <div className="w-px bg-[#222] shrink-0" />
    <div className="w-[1357px] pl-[3px] shrink-0 flex flex-col">
      <div className="h-[28px] flex items-center pt-[3px]">
        <div className="w-[948px] h-[24px] bg-[#444] border-t border-l border-[#222] leading-[22px] pl-[4px] text-[12px]">选择了 1 个 对象</div>
        <S w={10} h={13} cls="ml-[8px]"><path d="M2 6 V4 a3 3 0 0 1 6 0 V6" stroke="#ddd" /><rect y="6" width="10" height="7" fill="#d9b27a" /></S>
        <S w={14} h={14} cls="ml-[18px]"><rect width="14" height="14" fill="#eee" /><circle cx="7" cy="7" r="3" stroke="#333" /><path d="M7 0 V3 M7 11 V14 M0 7 H3 M11 7 H14" stroke="#333" /></S>
        <span className="ml-[4px] w-[13px]">X:</span>
        <Field t="-698.596" cls="w-[56px] h-[20px]" />
        <span className="ml-[15px] w-[11px]">Y:</span>
        <Field t="81.052" cls="w-[56px] h-[20px]" />
        <span className="ml-[15px] w-[11px]">Z:</span>
        <Field t="0.0" cls="w-[56px] h-[20px]" />
        <div className="ml-[13px] w-[97px] h-[24px] bg-[#444] border-t border-l border-[#222] leading-[22px] pl-[5px]">栅格 = 10.0</div>
      </div>
      <div className="h-[22px] flex items-center">
        <div className="w-[1224px] h-[22px] bg-[#444] border-t border-l border-[#222] leading-[20px] pl-[4px]">单击或单击并拖动以选择对象</div>
        <div className="ml-[2px] w-[20px] h-[20px] bg-[#3f7fd2] border border-[#111] flex items-center justify-center shrink-0">
          <S w={14} h={14}><rect x="1" y="1" width="12" height="12" stroke="#fff" strokeWidth="1.5" /><rect x="3" y="3" width="8" height="8" fill="#9ec3ea" stroke="#fff" /></S>
        </div>
        <div className="ml-[4px] w-[97px] h-[22px] bg-[#444] border-t border-l border-[#222] leading-[20px] pl-[5px]">添加时间标记</div>
      </div>
    </div>
    <div className="flex-1 flex flex-col pl-[2px]">
      <div className="h-[26px] flex items-center">
        <div className="ml-[361px] w-px h-[20px] bg-[#222]" />
        <S w={18} h={16} cls="ml-[4px]"><circle cx="6" cy="8" r="4.5" fill="#e6e6e6" /><path d="M9 10 L13 14" stroke="#ddd" strokeWidth="2" /><path d="M13 2 H18 M15.5 0 V5" stroke="#ddd" /></S>
        <S w={15} h={15} cls="ml-[7px]"><rect x="0" y="0" width="6" height="6" fill="#eee" /><rect x="7" y="0" width="6" height="6" fill="#ccc" /><rect x="0" y="7" width="6" height="6" fill="#ccc" /><circle cx="10" cy="10" r="3" stroke="#eee" /></S>
        <S w={18} h={18} cls="ml-[5px]"><path d="M1 5 V1 H5 M13 1 H17 V5 M1 13 V17 H5" stroke="#ddd" /><path d="M5 7 L9 5 H13 V12 L9 14 H5 Z" fill="#6f9b68" /></S>
        <S w={16} h={18} cls="ml-[7px]"><rect x="8" y="1" width="7" height="7" fill="#ddd" /><rect x="1" y="8" width="8" height="8" fill="#7aa070" /><path d="M12 16 L16 12 V16 Z" fill="#fff" /></S>
      </div>
      <div className="h-[24px] -mt-[2px] flex items-center">
        <S w={24} h={12} cls="ml-[8px] -mt-[10px]"><circle cx="6" cy="5" r="4.5" stroke="#111" strokeWidth="1.5" /><path d="M10 5 H24 M17 5 V9 M21 5 V9" stroke="#111" strokeWidth="1.5" /></S>
        <div className="w-[64px] h-[20px] ml-[10px] bg-[#3f3f3f] border border-[#222] border-t-[#111] text-center leading-[18px] shrink-0">设置关键点</div>
        <S w={20} h={20} cls="ml-[5px]"><path d="M1 16 L6 4 L10 14 L14 7" stroke="#c85a5a" strokeWidth="1.3" /><path d="M14 20 L20 14 V20 Z" fill="#fff" /></S>
        <div className="ml-[5px] w-[93px] h-[20px] bg-[#3f3f3f] border-b border-[#222] text-center leading-[18px] shrink-0">关键点过滤器...</div>
        <S w={18} h={12} cls="ml-[7px]"><path d="M1 1 V11 M8 2 L2 6 L8 10 Z M10 2 L16 6 L10 10 Z M17 1 V11" stroke="#ccc" /></S>
        <div className="ml-[7px] w-[65px] h-[20px] bg-[#4a4a4a] border-t-2 border-l-2 border-[#111] leading-[17px] pl-[4px] shrink-0">0</div>
        <Spin cls="ml-[2px] h-[20px]" />
        <S w={18} h={18} cls="ml-[6px]"><rect x="0" y="0" width="16" height="14" fill="#e0e6ee" stroke="#2a4fa0" /><rect x="2" y="3" width="5" height="5" fill="#2a5fa8" /><circle cx="13" cy="13" r="4.5" fill="#222" stroke="#ddd" /></S>
        <S w={15} h={15} cls="ml-[4px]"><rect x="1" y="1" width="10" height="10" stroke="#ddd" strokeDasharray="2 2" /><circle cx="11" cy="11" r="3" fill="#ddd" /></S>
        <S w={16} h={18} cls="ml-[15px]"><path d="M4 17 L1 9 L3 8 L5 11 V2 H7 V8 V1 H9 V8 V2 H11 V9 V4 H13 V12 L11 17 Z" fill="#e8e8e8" /></S>
        <S w={16} h={18} cls="ml-[3px]"><circle cx="8" cy="9" r="7" stroke="#ccc" strokeDasharray="5 2" /><path d="M8 4 L13 13 H3 Z" fill="#6f9b68" stroke="#eee" /></S>
        <S w={14} h={14} cls="ml-[5px]"><rect width="14" height="14" fill="#e8e8e8" /><path d="M3 3 L11 11 M3 3 H7 M3 3 V7 M11 11 H7 M11 11 V7" stroke="#222" /></S>
      </div>
    </div>
  </div>
);

const Watermark = () => (
  <div className="absolute z-20 left-[1474px] top-[854px] w-[340px] h-[160px] bg-[#20305a] flex items-start">
    <svg width="66" height="70" viewBox="0 0 66 70" fill="none" className="ml-[26px] mt-[45px] shrink-0">
      <path d="M17 64 C8 64 3 60 3 48 V20 C3 6 13 1 24 7 L56 25 C66 31 66 39 56 45 L28 63 C20 68 14 60 19 55" stroke="#c9ccd3" strokeWidth="5" strokeLinecap="round" />
      <path d="M25 25 L39 35 L25 44 Z" fill="#c9ccd3" />
      <rect x="42" y="26" width="3" height="18" fill="#c9ccd3" />
    </svg>
    <div className="ml-[24px] mt-[39px] flex flex-col text-[#c9ccd3]">
      <span className="text-[44px] leading-[56px] font-bold tracking-[7px] whitespace-nowrap font-[family-name:'Noto_Sans_CJK_SC',sans-serif]">溜溜自学</span>
      <span className="-mt-[1px] text-[17px] leading-[18px] tracking-[4px] whitespace-nowrap font-[family-name:'Liberation_Sans',sans-serif]">ZIXUE.3D66.COM</span>
    </div>
  </div>
);

const Annotation = () => (
  <svg className="absolute z-20 left-0 top-0 pointer-events-none" width="1920" height="1040" viewBox="0 0 1920 1040" fill="none">
    <rect x="1825" y="499" width="46" height="37" stroke="#f00000" strokeWidth="4" />
    <path d="M1581 672 L1850 515" stroke="#e80f0f" strokeWidth="4" />
    <path d="M1832 536 L1850 514 L1826 518" stroke="#e80f0f" strokeWidth="4" />
  </svg>
);

const Logo = () => (
  <div className="absolute z-20 left-0 top-0 w-[40px] h-[40px] bg-[linear-gradient(135deg,#1f7f70,#0c4a40)] border border-[#1b3b38] flex items-center justify-center">
    <svg width="32" height="30" viewBox="0 0 32 30" fill="none">
      <path d="M21 4 C10 0 3 7 3 15 C3 23 10 27 16 26 C22 25 26 20 23 15 C20 11 12 12 12 17" stroke="#e8f4f0" strokeWidth="3" />
      <circle cx="17" cy="18" r="1.5" fill="#e8f4f0" />
      <path d="M27 13 H32 L29.5 17 Z" fill="#222" />
    </svg>
  </div>
);

export default function App() {
  return (
    <div className="relative w-[1920px] h-[1040px] overflow-hidden flex flex-col bg-[#3f3f3f] font-[family-name:'Liberation_Sans','Noto_Sans_CJK_SC',sans-serif]">
      <TitleBar />
      <MenuBar />
      <Toolbar />
      <Ribbon />
      <div className="flex h-[866px]">
        <div className="w-[1737px] shrink-0 flex flex-col">
          <Viewport />
          <TimeSlider />
          <Track />
        </div>
        <CommandPanel />
      </div>
      <Status />
      <Logo />
      <Watermark />
      <Annotation />
    </div>
  );
}
